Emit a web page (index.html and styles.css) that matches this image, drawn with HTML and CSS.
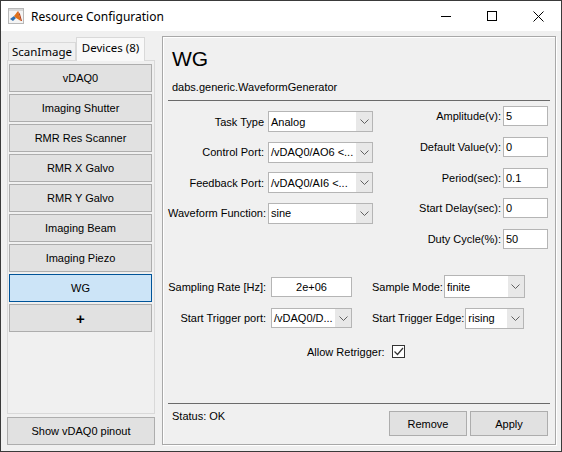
FILE: index.html
```html
<!DOCTYPE html>
<html lang="en">
<head>
    <meta charset="UTF-8">
    <title>Resource Configuration</title>
    <link rel="stylesheet" href="styles.css">
</head>
<body>
<div class="window">
    <div class="titlebar">
        <svg class="app-icon" viewBox="0 0 16 16" width="16" height="16">
            <rect x="0.5" y="0.5" width="15" height="15" fill="#f4f4f4" stroke="#b8b8b8"/>
            <rect x="1" y="1" width="14" height="2" fill="#d8d8d8"/>
            <polygon points="2,11 6,8 8,10 5,13" fill="#2f6fb0"/>
            <polygon points="6,8 10,3 13,13 8,10" fill="#e0701a"/>
            <polygon points="10,3 12,6 14,13 13,13" fill="#b33a12"/>
        </svg>
        <span class="title">Resource Configuration</span>
        <div class="controls">
            <div class="ctl"><span class="ic-min"></span></div>
            <div class="ctl"><span class="ic-max"></span></div>
            <div class="ctl">
                <svg width="11" height="11" viewBox="0 0 11 11"><path d="M0.5 0.5 L10.5 10.5 M10.5 0.5 L0.5 10.5" stroke="#000" stroke-width="1"/></svg>
            </div>
        </div>
    </div>

    <div class="main">
        <div class="sidebar">
            <div class="tabs">
                <div class="tab">ScanImage</div>
                <div class="tab active">Devices (8)</div>
            </div>
            <div class="tab-panel">
                <div class="device-btn">vDAQ0</div>
                <div class="device-btn">Imaging Shutter</div>
                <div class="device-btn">RMR Res Scanner</div>
                <div class="device-btn">RMR X Galvo</div>
                <div class="device-btn">RMR Y Galvo</div>
                <div class="device-btn">Imaging Beam</div>
                <div class="device-btn">Imaging Piezo</div>
                <div class="device-btn selected">WG</div>
                <div class="device-btn add">+</div>
            </div>
            <div class="btn pinout">Show vDAQ0 pinout</div>
        </div>

        <div class="panel">
            <h1 class="dev-name">WG</h1>
            <div class="dev-class">dabs.generic.WaveformGenerator</div>
            <div class="sep"></div>

            <div class="form-top">
                <div class="col-left">
                    <div class="row">
                        <span class="lbl">Task Type</span>
                        <div class="dd w105"><span class="dd-text">Analog</span><span class="arrow"><svg width="9" height="5" viewBox="0 0 9 5"><polyline points="0.5,0.5 4.5,4.5 8.5,0.5" fill="none" stroke="#606060"/></svg></span></div>
                    </div>
                    <div class="row">
                        <span class="lbl">Control Port:</span>
                        <div class="dd w105"><span class="dd-text">/vDAQ0/AO6 &lt;...</span><span class="arrow"><svg width="9" height="5" viewBox="0 0 9 5"><polyline points="0.5,0.5 4.5,4.5 8.5,0.5" fill="none" stroke="#606060"/></svg></span></div>
                    </div>
                    <div class="row">
                        <span class="lbl">Feedback Port:</span>
                        <div class="dd w105"><span class="dd-text">/vDAQ0/AI6 &lt;...</span><span class="arrow"><svg width="9" height="5" viewBox="0 0 9 5"><polyline points="0.5,0.5 4.5,4.5 8.5,0.5" fill="none" stroke="#606060"/></svg></span></div>
                    </div>
                    <div class="row">
                        <span class="lbl">Waveform Function:</span>
                        <div class="dd w105"><span class="dd-text">sine</span><span class="arrow"><svg width="9" height="5" viewBox="0 0 9 5"><polyline points="0.5,0.5 4.5,4.5 8.5,0.5" fill="none" stroke="#606060"/></svg></span></div>
                    </div>
                </div>
                <div class="col-right">
                    <div class="row"><span class="lbl-r">Amplitude(v):</span><div class="field">5</div></div>
                    <div class="row"><span class="lbl-r">Default Value(v):</span><div class="field">0</div></div>
                    <div class="row"><span class="lbl-r">Period(sec):</span><div class="field">0.1</div></div>
                    <div class="row"><span class="lbl-r">Start Delay(sec):</span><div class="field">0</div></div>
                    <div class="row"><span class="lbl-r">Duty Cycle(%):</span><div class="field">50</div></div>
                </div>
            </div>

            <div class="brow first">
                <span class="blbl">Sampling Rate [Hz]:</span>
                <div class="field wide center">2e+06</div>
                <span class="rlbl">Sample Mode:</span>
                <div class="dd w81 tall"><span class="dd-text">finite</span><span class="arrow"><svg width="9" height="5" viewBox="0 0 9 5"><polyline points="0.5,0.5 4.5,4.5 8.5,0.5" fill="none" stroke="#606060"/></svg></span></div>
            </div>
            <div class="brow second">
                <span class="blbl">Start Trigger port:</span>
                <div class="dd w81"><span class="dd-text">/vDAQ0/D...</span><span class="arrow"><svg width="9" height="5" viewBox="0 0 9 5"><polyline points="0.5,0.5 4.5,4.5 8.5,0.5" fill="none" stroke="#606060"/></svg></span></div>
                <span class="rlbl">Start Trigger Edge:</span>
                <div class="dd w59"><span class="dd-text">rising</span><span class="arrow"><svg width="9" height="5" viewBox="0 0 9 5"><polyline points="0.5,0.5 4.5,4.5 8.5,0.5" fill="none" stroke="#606060"/></svg></span></div>
            </div>
            <div class="brow third">
                <span>Allow Retrigger:</span>
                <span class="check"><svg width="11" height="11" viewBox="0 0 11 11"><polyline points="1.5,5.5 4.5,8.5 10,2" fill="none" stroke="#333" stroke-width="1.2"/></svg></span>
            </div>

            <div class="footer">
                <div class="sep"></div>
                <div class="foot-row">
                    <span class="status">Status: OK</span>
                    <div class="btn action">Remove</div>
                    <div class="btn action">Apply</div>
                </div>
            </div>
        </div>
    </div>
</div>
</body>
</html>
```

FILE: styles.css
```css
* {
    margin: 0;
    padding: 0;
    box-sizing: border-box;
}

body {
    font-family: 'Liberation Sans', Arial, sans-serif;
    font-size: 11px;
    color: #000;
    background: #fff;
}

.window {
    width: 562px;
    height: 452px;
    border: 1px solid #3a3a3a;
    background: #f0f0f0;
    display: flex;
    flex-direction: column;
}

/* title bar */
.titlebar {
    height: 30px;
    flex-shrink: 0;
    background: #fff;
    display: flex;
    align-items: center;
}

.app-icon {
    margin-left: 7px;
}

.title {
    margin-left: 7px;
    font-family: 'Noto Sans', sans-serif;
    font-size: 12px;
}

.controls {
    margin-left: auto;
    display: flex;
    height: 100%;
}

.ctl {
    width: 46px;
    height: 30px;
    display: flex;
    align-items: center;
    justify-content: center;
}

.ic-min {
    width: 10px;
    height: 1px;
    background: #000;
}

.ic-max {
    width: 10px;
    height: 10px;
    border: 1px solid #000;
}

/* main area */
.main {
    flex: 1;
    display: flex;
    padding: 5px 0 0 6px;
}

.sidebar {
    width: 148px;
    display: flex;
    flex-direction: column;
    padding-top: 1px;
}

.tabs {
    height: 23px;
    display: flex;
    align-items: flex-end;
    padding-left: 1px;
    position: relative;
    z-index: 1;
}

.tab {
    width: 68px;
    height: 18px;
    border: 1px solid #d9d9d9;
    border-bottom: none;
    font-family: 'Noto Sans', sans-serif;
    font-size: 11.5px;
    line-height: 17px;
    text-align: center;
    background: #f0f0f0;
}

.tab.active {
    width: 69px;
    height: 24px;
    margin-bottom: -1px;
    line-height: 20px;
    background: #f9f9f9;
}

.tab-panel {
    height: 354px;
    border: 1px solid #d9d9d9;
    background: #f0f0f0;
    padding: 3px 1px;
    display: flex;
    flex-direction: column;
    gap: 2px;
}

.device-btn {
    width: 143px;
    height: 28px;
    background: #e1e1e1;
    border: 1px solid #adadad;
    display: flex;
    align-items: center;
    justify-content: center;
}

.device-btn.selected {
    background: #cce4f7;
    border-color: #005499;
}

.device-btn.add {
    font-size: 15px;
    font-weight: bold;
}

.btn {
    background: #e1e1e1;
    border: 1px solid #adadad;
    display: flex;
    align-items: center;
    justify-content: center;
}

.pinout {
    height: 28px;
    margin-top: 3px;
}

/* right panel */
.panel {
    width: 394px;
    height: 409px;
    margin-left: 7px;
    border: 1px solid #a8a8a8;
    box-shadow: inset 1px 1px 0 #fff, 1px 1px 0 #fff;
    display: flex;
    flex-direction: column;
}

.dev-name {
    margin-top: 9px;
    padding-left: 9px;
    font-size: 21px;
    font-weight: normal;
    line-height: 26px;
}

.dev-class {
    margin-top: 9px;
    padding-left: 9px;
    line-height: 13px;
}

.sep {
    height: 1px;
    margin: 0 5px;
    background: #6a6a6a;
}

.panel > .sep {
    margin-top: 6px;
}

.form-top {
    display: flex;
    justify-content: space-between;
    margin-top: 5px;
    padding: 0 7px 0 5px;
}

.col-left {
    padding-top: 5px;
    display: flex;
    flex-direction: column;
    gap: 9.5px;
}

.col-left .row {
    display: flex;
    align-items: center;
    gap: 4px;
}

.lbl {
    width: 96px;
    text-align: right;
    white-space: nowrap;
}

.col-right {
    display: flex;
    flex-direction: column;
    gap: 10.75px;
}

.col-right .row {
    display: flex;
    align-items: center;
    gap: 2px;
}

.lbl-r {
    width: 90px;
    text-align: right;
    white-space: nowrap;
}

.field {
    width: 45px;
    height: 20px;
    background: #fff;
    border: 1px solid #b5b5b5;
    padding-left: 2px;
    line-height: 18px;
}

.field.wide {
    width: 81px;
    height: 20px;
}

.field.center {
    text-align: center;
    padding-left: 0;
}

.dd {
    height: 21px;
    background: #fff;
    border: 1px solid #b5b5b5;
    display: flex;
    align-items: center;
}

.dd-text {
    flex: 1;
    padding-left: 2px;
    white-space: nowrap;
    overflow: hidden;
}

.arrow {
    width: 16px;
    height: 100%;
    background: #e8e8e8;
    display: flex;
    align-items: center;
    justify-content: center;
}

.w105 { width: 105px; }
.w81 { width: 81px; }
.w59 { width: 59px; }
.dd.tall { height: 23px; }

/* lower settings */
.brow {
    display: flex;
    align-items: center;
    padding-left: 5px;
    height: 23px;
}

.brow.first {
    margin-top: 26px;
}

.brow.second {
    margin-top: 8.5px;
}

.brow.second .dd.w81 {
    height: 20px;
}

.brow.third {
    margin-top: 15px;
    height: 14px;
    padding-left: 144px;
    gap: 7px;
}

.blbl {
    width: 98px;
    margin-right: 5px;
    text-align: right;
    white-space: nowrap;
}

.rlbl {
    margin-left: 20px;
    margin-right: 1px;
    white-space: nowrap;
}

.check {
    width: 13px;
    height: 13px;
    border: 1px solid #333;
    background: #fff;
    display: flex;
    align-items: center;
    justify-content: center;
}

/* footer */
.footer {
    margin-top: auto;
}

.foot-row {
    display: flex;
    padding: 0 7px 8px 9px;
    gap: 3px;
}

.status {
    margin-top: 6px;
    line-height: 13px;
    margin-right: auto;
}

.btn.action {
    width: 78px;
    height: 25px;
    margin-top: 7px;
}
```
